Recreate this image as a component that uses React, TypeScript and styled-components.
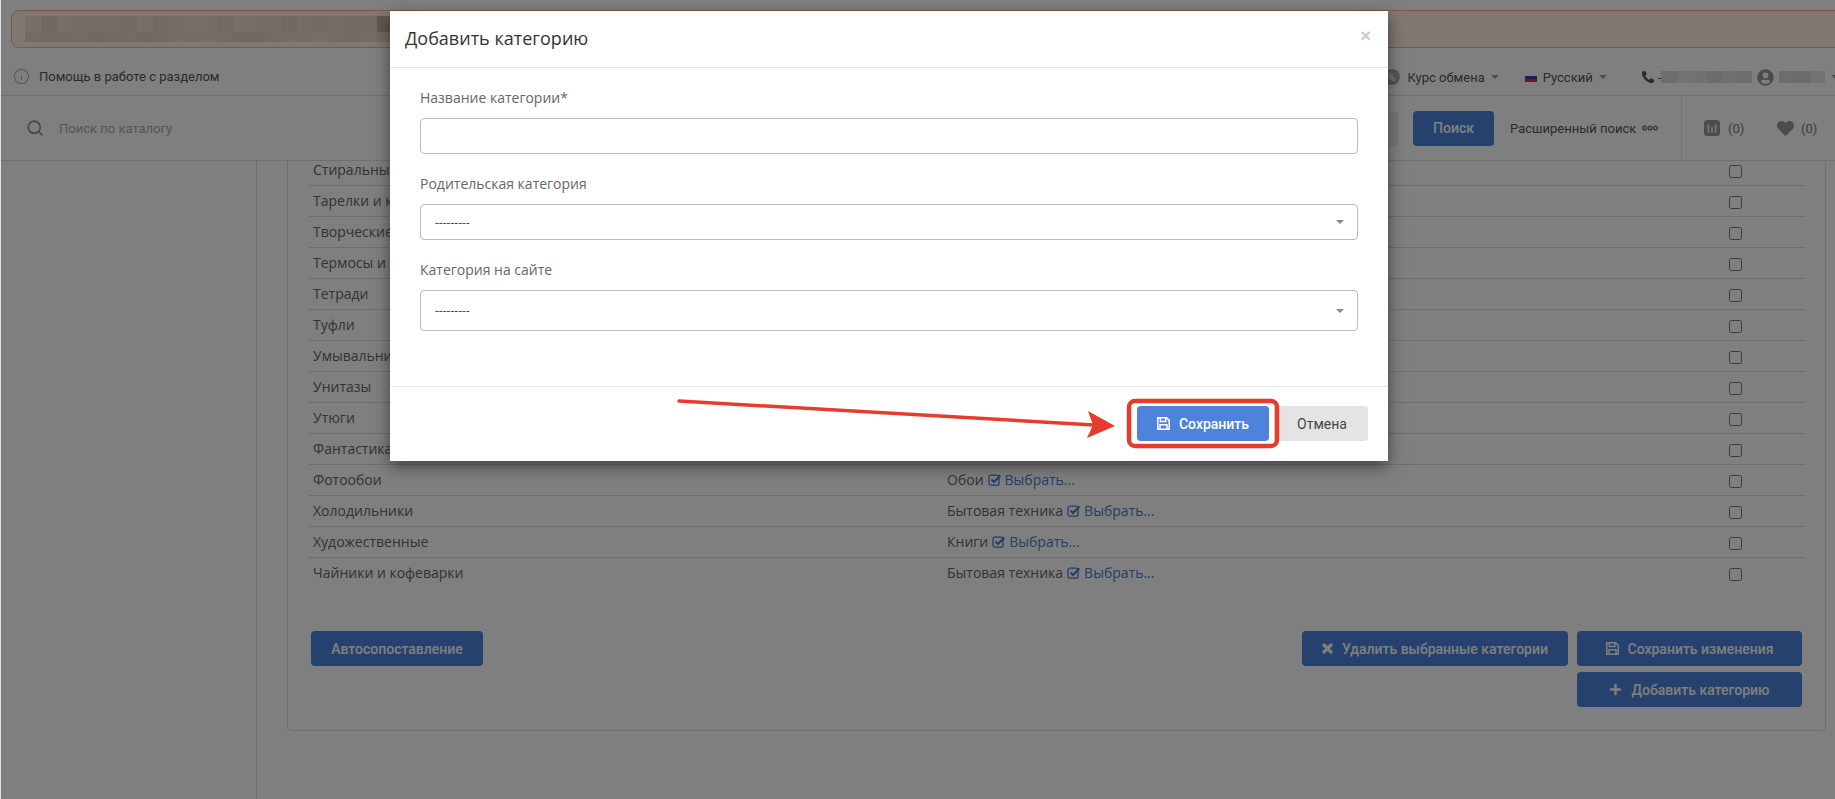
import React from "react";
import styled, { createGlobalStyle } from "styled-components";
import { FaPlus, FaPhoneAlt, FaUserCircle, FaHeart } from "react-icons/fa";
import { Info, Search } from "lucide-react";

const Global = createGlobalStyle`
  html, body { margin: 0; padding: 0; height: 100%; overflow: hidden; background: #fff; }
  #root { height: 100%; }
  * { box-sizing: border-box; }
`;

const Page = styled.div`
  position: relative;
  width: 1835px;
  height: 799px;
  overflow: hidden;
  display: flex;
  flex-direction: column;
  font-family: Roboto, "Liberation Sans", sans-serif;
  font-size: 13px;
  color: #555;
  background: #fff;
  border-left: 1px solid #e2e2e2;
`;

const Banner = styled.div`
  flex: 0 0 38px;
  margin: 10px -30px 0 10px;
  padding: 5px 13px;
  background: #fef1e6;
  border: 1px solid #f5b77c;
  border-radius: 8px;
`;

const Mosaic = styled.div`
  display: grid;
  grid-template-columns: repeat(23, 16px);
  grid-template-rows: 16px 10px;
`;

const Tile = styled.span`
  display: block;
`;

const TopRow = styled.div`
  flex: 0 0 48px;
  display: flex;
  align-items: center;
  padding: 10px 0 0 12px;
  margin-right: -4px;
  border-bottom: 1px solid #e0e0e0;
`;

const HelpLink = styled.div`
  display: flex;
  align-items: center;
  gap: 9px;
  flex: 1;
  color: #555;
  svg { color: #aaa; }
`;

const TopItem = styled.div<{ $ml: number }>`
  display: flex;
  align-items: center;
  margin-left: ${(p) => p.$ml}px;
  padding-top: 1px;
  color: #555;
  white-space: nowrap;
`;

const Caret = styled.i`
  display: inline-block;
  width: 0;
  height: 0;
  margin-left: 6px;
  border-left: 4px solid transparent;
  border-right: 4px solid transparent;
  border-top: 4px solid #999;
`;

const PercentBadge = styled.span`
  display: inline-flex;
  align-items: center;
  justify-content: center;
  width: 16px;
  height: 16px;
  border-radius: 50%;
  background: #aaa;
  color: #fff;
  font-size: 10px;
  font-weight: 700;
  margin-right: 8px;
`;

const Flag = styled.span`
  display: inline-block;
  width: 12px;
  height: 9px;
  margin-right: 6px;
  background: linear-gradient(#fff 0 33%, #2a45a8 33% 66%, #d8362a 66%);
`;

const Blur = styled.span<{ $ml?: number }>`
  display: inline-flex;
  height: 12px;
  margin-left: ${(p) => p.$ml ?? 0}px;
`;

const BlurTile = styled.span`
  display: block;
  width: 15.2px;
  height: 100%;
`;

const Dash = styled.span`
  margin-left: 4px;
`;

const SearchRow = styled.div`
  flex: 0 0 65px;
  display: flex;
  align-items: center;
  padding-left: 25px;
  border-bottom: 1px solid #e0e0e0;
`;

const Placeholder = styled.div`
  flex: 1;
  margin-left: 15px;
  color: #aaa;
  font-size: 13px;
`;

const SelectStub = styled.div`
  width: 120px;
  height: 35px;
  background: #f0f0f0;
  border-radius: 0 4px 4px 0;
  margin-right: 15px;
`;

const PrimaryButton = styled.button<{ $w?: number }>`
  display: inline-flex;
  align-items: center;
  justify-content: center;
  gap: 9px;
  height: 35px;
  width: ${(p) => (p.$w ? `${p.$w}px` : "auto")};
  padding: 0;
  border: 0;
  border-radius: 4px;
  background: #4d83da;
  color: #fff;
  font-family: Roboto, "Liberation Sans", sans-serif;
  font-size: 14px;
  font-weight: 500;
  white-space: nowrap;
`;

const AdvancedLink = styled.div`
  display: flex;
  align-items: center;
  gap: 6px;
  width: 187px;
  padding-left: 16px;
  color: #555;
  white-space: nowrap;
`;

const Counters = styled.div`
  display: flex;
  align-items: center;
  align-self: stretch;
  width: 154px;
  padding-left: 22px;
  border-left: 1px solid #e0e0e0;
  color: #777;
`;

const Counter = styled.div<{ $w: number; $gap: number }>`
  display: flex;
  align-items: center;
  gap: ${(p) => p.$gap}px;
  width: ${(p) => p.$w}px;
  font-size: 13px;
  svg { color: #999; }
`;

const Body = styled.div`
  flex: 1;
  display: flex;
  min-height: 0;
  overflow: hidden;
`;

const Sidebar = styled.aside`
  flex: 0 0 256px;
  border-right: 1px solid #e0e0e0;
`;

const Main = styled.main`
  flex: 1;
  padding: 0 9px 0 30px;
  min-width: 0;
`;

const Panel = styled.section`
  margin-top: -7px;
  border: 1px solid #ddd;
  border-radius: 4px;
  padding: 0 23px 23px 20px;
  font-family: "Open Sans", "Liberation Sans", sans-serif;
  font-size: 14px;
  color: #666;
`;

const Row = styled.div<{ $last?: boolean }>`
  display: grid;
  grid-template-columns: 634px 1fr 13px;
  align-items: center;
  height: 31px;
  margin-right: -3px;
  padding: 0 63px 2px 5px;
  border-bottom: ${(p) => (p.$last ? "1px solid transparent" : "1px solid #ddd")};
`;

const CategoryCell = styled.div`
  display: flex;
  align-items: center;
  gap: 4px;
`;

const ChooseLink = styled.span`
  color: #4a7dcc;
  display: inline-flex;
  align-items: center;
  gap: 3px;
`;

const Check = styled.input`
  width: 13px;
  height: 13px;
  margin: 5px 0 0;
`;

const Actions = styled.div`
  display: flex;
  justify-content: space-between;
  align-items: flex-start;
  margin-top: 42px;
  padding-left: 3px;
`;

const ActionGrid = styled.div`
  display: grid;
  grid-template-columns: 266px 225px;
  gap: 6px 9px;
`;

const SecondSlot = styled.div`
  grid-column: 2;
`;

const Backdrop = styled.div`
  position: absolute;
  inset: 0;
  background: rgba(0, 0, 0, 0.5);
`;

const Modal = styled.div`
  position: absolute;
  left: 389px;
  top: 11px;
  width: 998px;
  background: #fff;
  box-shadow: 0 5px 15px rgba(0, 0, 0, 0.5);
  font-family: "Open Sans", "Liberation Sans", sans-serif;
`;

const ModalHeader = styled.header`
  display: flex;
  align-items: center;
  justify-content: space-between;
  height: 57px;
  padding: 0 17px 3px 15px;
  border-bottom: 1px solid #e5e5e5;
`;

const ModalTitle = styled.h4`
  margin: 0;
  font-size: 18px;
  font-weight: 400;
  color: #333;
`;

const CloseIcon = styled.span`
  font-family: "Liberation Sans", sans-serif;
  font-size: 19px;
  font-weight: 700;
  color: #ccc;
  line-height: 1;
  margin-top: -4px;
`;

const ModalBody = styled.div`
  padding: 20px 30px 55px 30px;
`;

const Field = styled.div`
  margin-bottom: 20px;
  &:last-child { margin-bottom: 0; }
`;

const Label = styled.label`
  display: block;
  height: 20px;
  margin-bottom: 10px;
  font-size: 14px;
  line-height: 20px;
  color: #666;
`;

const TextBox = styled.input`
  display: block;
  width: 100%;
  height: 36px;
  border: 1px solid #bbb;
  border-radius: 4px;
  background: #fff;
  outline: none;
`;

const SelectBox = styled.div<{ $h: number }>`
  display: flex;
  align-items: center;
  justify-content: space-between;
  width: 100%;
  height: ${(p) => p.$h}px;
  padding: 0 13px 0 14px;
  border: 1px solid #bbb;
  border-radius: 4px;
  font-size: 12px;
  color: #444;
`;

const SelectCaret = styled.i`
  width: 0;
  height: 0;
  border-left: 4px solid transparent;
  border-right: 4px solid transparent;
  border-top: 4px solid #888;
`;

const ModalFooter = styled.footer`
  display: flex;
  justify-content: flex-end;
  gap: 5px;
  padding: 19px 20px 20px;
  border-top: 1px solid #e5e5e5;
`;

const CancelButton = styled.button`
  width: 94px;
  height: 35px;
  padding: 0 0 0 2px;
  border: 0;
  border-radius: 4px;
  background: #e4e4e4;
  color: #444;
  font-family: Roboto, "Liberation Sans", sans-serif;
  font-size: 14px;
`;

const Annotation = styled.svg`
  position: absolute;
  left: -1px;
  top: 0;
  pointer-events: none;
`;

const Dots = () => (
  <svg width="16" height="6" viewBox="0 0 16 6" fill="none" stroke="#777" strokeWidth="1.5">
    <circle cx="2.6" cy="3" r="1.8" />
    <circle cx="8" cy="3" r="1.8" />
    <circle cx="13.4" cy="3" r="1.8" />
  </svg>
);

const CheckSquare = () => (
  <svg width="14" height="13" viewBox="0 0 14 13" fill="none" stroke="currentColor">
    <rect x="1" y="2.2" width="10" height="10" rx="2" strokeWidth="1.3" />
    <path d="M3.6 6.6 L6 9 L12.4 2.4" strokeWidth="2.1" />
  </svg>
);

const BoldTimes = () => (
  <svg width="11" height="11" viewBox="0 0 11 11" fill="none" stroke="currentColor" strokeWidth="3.2" strokeLinecap="round">
    <path d="M2 2 L9 9 M9 2 L2 9" />
  </svg>
);

const Floppy = () => (
  <svg width="13" height="13" viewBox="0 0 13 13" fill="none" stroke="currentColor" strokeWidth="1.5">
    <path d="M.8.8 H9.6 L12.2 3.4 V12.2 H.8 Z" />
    <path d="M3.4 .8 V4.6 H8.8 V.8" />
    <path d="M3 12.2 V7.8 H10 V12.2" />
  </svg>
);

const CompareIcon = () => (
  <svg width="16" height="16" viewBox="0 0 16 16">
    <rect width="16" height="16" rx="3.5" fill="#999" />
    <path d="M3.5 4.5h1.8v8H3.5z M7.1 7h1.8v5.5H7.1z M10.7 4.5h1.8v8h-1.8z" fill="#eee" />
  </svg>
);

const bannerTiles = Array.from({ length: 46 }, (_, i) => {
  const v = Math.abs(Math.sin(i * 12.9898) * 43758.5453) % 1;
  const d = Math.round(v * 14);
  const edge = i === 22 ? 36 : 0;
  return `rgb(${238 - d - edge},${224 - d - edge},${212 - d - edge})`;
});

const greyTiles = (n: number, seed: number) =>
  Array.from({ length: n }, (_, i) => {
    const v = Math.abs(Math.sin((i + seed) * 78.233) * 12543.123) % 1;
    const g = Math.round(212 + v * 20);
    return `rgb(${g},${g},${g})`;
  });

const rows: [string, string][] = [
  ["Стиральные", "Бытовая техника"],
  ["Тарелки и кружки", "Посуда"],
  ["Творческие", "Книги"],
  ["Термосы и кружки", "Посуда"],
  ["Тетради", "Канцелярия"],
  ["Туфли", "Обувь"],
  ["Умывальники", "Сантехника"],
  ["Унитазы", "Сантехника"],
  ["Утюги", "Бытовая техника"],
  ["Фантастика", "Книги"],
  ["Фотообои", "Обои"],
  ["Холодильники", "Бытовая техника"],
  ["Художественные", "Книги"],
  ["Чайники и кофеварки", "Бытовая техника"],
];

export default function App() {
  return (
    <Page>
      <Global />
      <Banner>
        <Mosaic>
          {bannerTiles.map((c, i) => (
            <Tile key={i} style={{ background: c }} />
          ))}
        </Mosaic>
      </Banner>

      <TopRow>
        <HelpLink>
          <Info size={17} strokeWidth={1.5} />
          Помощь в работе с разделом
        </HelpLink>
        <TopItem $ml={0}>
          <PercentBadge>%</PercentBadge>
          Курс обмена
          <Caret />
        </TopItem>
        <TopItem $ml={26}>
          <Flag />
          Русский
          <Caret />
        </TopItem>
        <TopItem $ml={35}>
          <FaPhoneAlt size={12} color="#555" />
          <Dash>-</Dash>
          <Blur>
            {greyTiles(6, 1).map((c, i) => (
              <BlurTile key={i} style={{ background: c }} />
            ))}
          </Blur>
        </TopItem>
        <TopItem $ml={5}>
          <FaUserCircle size={17} color="#999" />
          <Blur $ml={5}>
            {greyTiles(3, 9).map((c, i) => (
              <BlurTile key={i} style={{ background: c }} />
            ))}
          </Blur>
          <Caret />
        </TopItem>
      </TopRow>

      <SearchRow>
        <Search size={18} color="#999" strokeWidth={2.4} />
        <Placeholder>Поиск по каталогу</Placeholder>
        <SelectStub />
        <PrimaryButton $w={81}>Поиск</PrimaryButton>
        <AdvancedLink>
          Расширенный поиск
          <Dots />
        </AdvancedLink>
        <Counters>
          <Counter $w={73} $gap={8}>
            <CompareIcon />
            (0)
          </Counter>
          <Counter $w={50} $gap={7}>
            <FaHeart size={17} />
            (0)
          </Counter>
        </Counters>
      </SearchRow>

      <Body>
        <Sidebar />
        <Main>
          <Panel>
            {rows.map(([name, cat], i) => (
              <Row key={name} $last={i === rows.length - 1}>
                <div>{name}</div>
                <CategoryCell>
                  {cat}
                  <ChooseLink>
                    <CheckSquare />
                    Выбрать...
                  </ChooseLink>
                </CategoryCell>
                <Check type="checkbox" />
              </Row>
            ))}
            <Actions>
              <PrimaryButton $w={172}>Автосопоставление</PrimaryButton>
              <ActionGrid>
                <PrimaryButton>
                  <BoldTimes />
                  Удалить выбранные категории
                </PrimaryButton>
                <PrimaryButton>
                  <Floppy />
                  Сохранить изменения
                </PrimaryButton>
                <SecondSlot>
                  <PrimaryButton $w={225}>
                    <FaPlus size={13} />
                    Добавить категорию
                  </PrimaryButton>
                </SecondSlot>
              </ActionGrid>
            </Actions>
          </Panel>
        </Main>
      </Body>

      <Backdrop />

      <Modal>
        <ModalHeader>
          <ModalTitle>Добавить категорию</ModalTitle>
          <CloseIcon>×</CloseIcon>
        </ModalHeader>
        <ModalBody>
          <Field>
            <Label>Название категории*</Label>
            <TextBox type="text" />
          </Field>
          <Field>
            <Label>Родительская категория</Label>
            <SelectBox $h={36}>
              ---------
              <SelectCaret />
            </SelectBox>
          </Field>
          <Field>
            <Label>Категория на сайте</Label>
            <SelectBox $h={41}>
              ---------
              <SelectCaret />
            </SelectBox>
          </Field>
        </ModalBody>
        <ModalFooter>
          <PrimaryButton $w={132}>
            <Floppy />
            Сохранить
          </PrimaryButton>
          <CancelButton>Отмена</CancelButton>
        </ModalFooter>
      </Modal>

      <Annotation width="1835" height="799" viewBox="0 0 1835 799" fill="none">
        <rect x="1129" y="401" width="148" height="45" rx="6" stroke="#e53c2e" strokeWidth="4.5" />
        <line x1="679" y1="401" x2="1094" y2="425" stroke="#e53c2e" strokeWidth="3.5" strokeLinecap="round" />
        <polygon points="1115,426 1088,411 1093,425 1087,438" fill="#e53c2e" />
      </Annotation>
    </Page>
  );
}
